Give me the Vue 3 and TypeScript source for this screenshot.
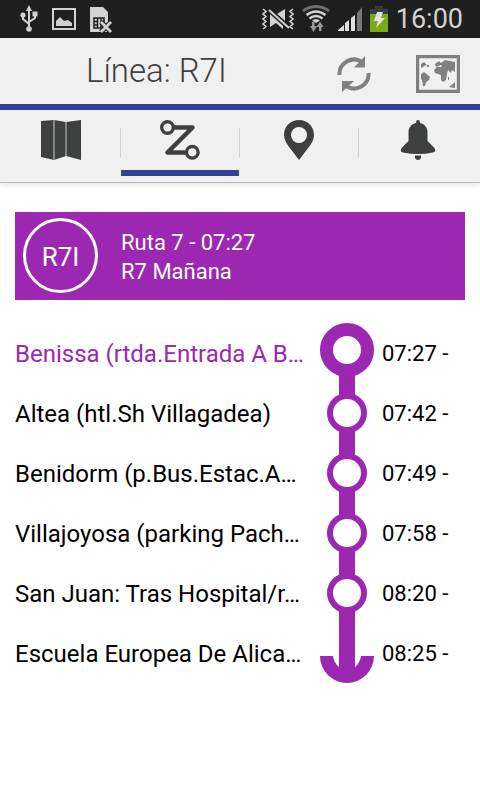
<script setup lang="ts">
import { ref } from 'vue'

type StopKind = 'start' | 'middle' | 'end'

interface Stop {
  name: string
  time: string
  kind: StopKind
}

const stops: Stop[] = [
  { name: 'Benissa (rtda.Entrada A B…', time: '07:27 -', kind: 'start' },
  { name: 'Altea (htl.Sh Villagadea)', time: '07:42 -', kind: 'middle' },
  { name: 'Benidorm (p.Bus.Estac.A…', time: '07:49 -', kind: 'middle' },
  { name: 'Villajoyosa (parking Pach…', time: '07:58 -', kind: 'middle' },
  { name: 'San Juan: Tras Hospital/r…', time: '08:20 -', kind: 'middle' },
  { name: 'Escuela Europea De Alica…', time: '08:25 -', kind: 'end' },
]

const tabs = ['map', 'route', 'place', 'alerts'] as const
const active = ref<(typeof tabs)[number]>('route')
</script>

<template>
  <div class="screen">
    <div class="status">
      <div class="status-group notices">
        <svg width="18" height="28" viewBox="0 0 18 28" fill="none" stroke="#d2d2d2" stroke-width="2">
          <path d="M9 4V24M3 10V14L9 19M15 9V13L9 17" />
          <path d="M9 0L12 6H6Z" fill="#d2d2d2" stroke="none" />
          <circle cx="3" cy="10" r="2.6" fill="#d2d2d2" stroke="none" />
          <circle cx="9" cy="24" r="2.8" fill="#d2d2d2" stroke="none" />
          <path d="M12.5 6.500h5v5h-5z" fill="#d2d2d2" stroke="none" />
        </svg>
        <svg width="24" height="22" viewBox="0 0 24 22">
          <path d="M1 1H23V21H1Z" fill="none" stroke="#d2d2d2" stroke-width="2" />
          <path d="M4 18V13L8 9L12 13L16 12L20 15V18Z" fill="#d2d2d2" />
        </svg>
        <svg width="24" height="27" viewBox="0 0 24 27">
          <path d="M0 1H13L18 6V26H0Z" fill="#d2d2d2" />
          <path d="M4 12H14V22H4ZM7.500 12V22M11 12V22M4 15.500H7.500M11 15.500H14M4 19H7.500" fill="none" stroke="#1f1f1f" stroke-width="1.500" />
          <path d="M11 16L21 26M21 16L11 26" stroke="#1f1f1f" stroke-width="5" />
          <path d="M11 16L21 26M21 16L11 26" stroke="#d2d2d2" stroke-width="2.800" />
        </svg>
      </div>
      <div class="status-group system">
        <svg width="32" height="22" viewBox="0 0 32 22">
          <path d="M8 3H9L21 15V21L14 15L8 19ZM15 6L23 1V13Z" fill="#d2d2d2" />
          <path d="M7 2L27 20" stroke="#1f1f1f" stroke-width="5" />
          <path d="M7 2L27 20" stroke="#d2d2d2" stroke-width="2" />
          <path d="M1 1L4 3.500L1 6L4 8.500L1 11L4 13.500L1 16L4 18.500L1 21M31 1L28 3.500L31 6L28 8.500L31 11L28 13.500L31 16L28 18.500L31 21" fill="none" stroke="#d2d2d2" stroke-width="1.500" />
        </svg>
        <svg width="28" height="28" viewBox="0 0 28 28" fill="none">
          <path d="M1 6Q14 -3 27 6" stroke="#6d6d6d" stroke-width="3" />
          <path d="M4.500 10Q14 3 23.500 10M7.500 13.500Q14 8.500 20.500 13.500" stroke="#d2d2d2" stroke-width="2.600" />
          <path d="M10 15.500Q14 12.500 18 15.500L14 18Z" fill="#d2d2d2" />
          <path d="M8 21H10V17H12.500V21H15L11.500 27ZM17 26V22H14.500L18 16.500L21.500 22H19.500V26Z" fill="#969696" />
        </svg>
        <svg width="24" height="24" viewBox="0 0 24 24">
          <path d="M0 24V23L6 18V24ZM7 24V16L11 13V24ZM13 24V11L17 8V24Z" fill="#e0e0e0" />
          <path d="M19 24V6L24 0V24Z" fill="#777" />
        </svg>
        <svg width="18" height="26" viewBox="0 0 18 26">
          <path d="M5 0H13V3H18V8H0V3H5Z" fill="#3b3b3b" />
          <path d="M0 8H18V26H0Z" fill="#7aab14" />
          <path d="M7 6H13L11 12H15L6 22L8 15H4Z" fill="#e2e2e2" />
        </svg>
        <span class="clock">16:00</span>
      </div>
    </div>

    <header class="bar">
      <h1>Línea: R7I</h1>
      <div class="actions">
        <button type="button" aria-label="Actualizar">
          <svg width="34" height="36" viewBox="0 0 34 36">
            <path d="M2.500 19A14.500 14.500 0 0 1 25 6" fill="none" stroke="#808080" stroke-width="4" />
            <path d="M31.500 17A14.500 14.500 0 0 1 9 30" fill="none" stroke="#808080" stroke-width="4" />
            <path d="M28 0V11.500H17ZM5 36V25H17Z" fill="#808080" />
          </svg>
        </button>
        <button type="button" aria-label="Mapa">
          <svg width="44" height="38" viewBox="0 0 44 38">
            <path d="M1.500 1.500H42.500V36.500H1.500Z" fill="none" stroke="#808080" stroke-width="3.400" />
            <g fill="#808080">
              <path d="M5 9L8 7L11 10L8 11L6 13L5 12Z" />
              <path d="M5 19L8 17L12 20L14 22L13 25L10 27L9 31L7 31L6 25L5 24Z" />
              <path d="M19 9L23 6L25 8L29 5L34 6L39 7V17L36 15L35 18L32 15L31 19L30 25L27 27L25 25V20L19 18L18 15L21 12H26L25 10L20 12Z" />
              <path d="M33 32L39 27V33Z" />
              <path d="M11 10H13V12H11ZM32 22H33V25H32Z" />
            </g>
          </svg>
        </button>
      </div>
    </header>

    <nav class="tabs">
      <button
        v-for="tab in tabs"
        :key="tab"
        type="button"
        :class="['tab', { active: active === tab }]"
        :aria-label="tab"
        @click="active = tab"
      >
        <svg v-if="tab === 'map'" width="40" height="40" viewBox="0 0 40 40">
          <path d="M0 1L13 0L25 2L40 0V40L25 36L13 40L0 37Z" fill="#3e403f" />
          <path d="M13 0V40M25 2V36" stroke="#8d8e8e" stroke-width="1.800" />
        </svg>
        <svg v-else-if="tab === 'route'" width="40" height="40" viewBox="0 0 40 40" fill="none" stroke="#3e403f">
          <path d="M14 7.500H32.500L7.500 32.500H26" stroke-width="4.500" stroke-linejoin="round" />
          <circle cx="7.500" cy="7.500" r="5.800" stroke-width="3.400" />
          <circle cx="32.300" cy="32.300" r="5.800" stroke-width="3.400" />
        </svg>
        <svg v-else-if="tab === 'place'" width="30" height="40" viewBox="0 0 30 40">
          <path fill-rule="evenodd" d="M15 0C6.500 0 0 6.500 0 15C0 19 2 22.500 4 25.500L15 40L26 25.500C28 22.500 30 19 30 15C30 6.500 23.500 0 15 0ZM15 7A8 8 0 1 1 15 23A8 8 0 1 1 15 7Z" fill="#3e403f" />
        </svg>
        <svg v-else width="36" height="40" viewBox="0 0 36 40" fill="#3e403f">
          <path d="M16.500 0.500Q18 -0.500 19.500 0.500L20 3C25 4 27.500 8 27.500 12V21L34 27.500Q37 31.500 33 32.500Q25 34 18 34Q11 34 3 32.500Q-1 31.500 2 27.500L8.500 21V12C8.500 8 11 4 16 3Z" />
          <path d="M15 35.500H21V38Q20 40 18 40Q16 40 15 38Z" />
        </svg>
      </button>
    </nav>

    <main>
      <section class="route">
        <div class="badge">R7I</div>
        <div class="route-text">
          <div>Ruta 7 - 07:27</div>
          <div>R7 Mañana</div>
        </div>
      </section>

      <ol class="stops">
        <li v-for="stop in stops" :key="stop.time" :class="['stop', stop.kind]">
          <span class="name">{{ stop.name }}</span>
          <svg class="track" width="54" height="60" viewBox="0 0 54 60">
            <template v-if="stop.kind === 'start'">
              <path d="M19 40H35V60H19Z" fill="#9c27b0" />
              <circle cx="27" cy="27" r="20.500" fill="#fff" stroke="#9c27b0" stroke-width="13" />
            </template>
            <template v-else-if="stop.kind === 'middle'">
              <path d="M19 0H35V60H19Z" fill="#9c27b0" />
              <circle cx="27" cy="30" r="17" fill="#fff" stroke="#9c27b0" stroke-width="6" />
            </template>
            <path
              v-else
              d="M19 0H35V44Q40 40 41 33H54A27 27 0 0 1 0 33H13Q14 40 19 44Z"
              fill="#9c27b0"
            />
          </svg>
          <time>{{ stop.time }}</time>
        </li>
      </ol>
    </main>
  </div>
</template>

<style>
body {
  margin: 0;
  background: #fff;
}
</style>

<style scoped>
.screen {
  min-height: 100vh;
  background: #fff;
  color: #000;
  font-family: Roboto, "Liberation Sans", sans-serif;
}

svg {
  display: block;
  flex: none;
}

button {
  padding: 0;
  border: 0;
  background: none;
  cursor: pointer;
}

.status {
  display: flex;
  justify-content: space-between;
  align-items: center;
  height: 38px;
  padding: 0 17px 0 20px;
  background: #1f1f1f;
}

.status-group {
  display: flex;
  align-items: center;
}

.notices {
  gap: 14px;
}

.system {
  gap: 8px;
}

.clock {
  color: #d2d2d2;
  font-size: 27px;
  line-height: 38px;
}

.bar {
  display: flex;
  justify-content: space-between;
  align-items: center;
  height: 66px;
  padding: 0 20px 0 86px;
  border-bottom: 6px solid #324394;
  background: #f0f0f0;
}

.bar h1 {
  margin: 0;
  color: #3e403f;
  font-size: 33px;
  font-weight: 300;
  line-height: 66px;
}

.actions {
  display: flex;
  align-items: center;
  gap: 45px;
  padding-top: 6px;
}

.tabs {
  display: grid;
  grid-template-columns: repeat(4, 1fr);
  gap: 1px;
  height: 72px;
  padding: 0 3px 0 2px;
  border-bottom: 1px solid #b8b8b8;
  background: #f0f0f0;
  box-shadow: 0 2px 6px rgba(0, 0, 0, 0.1);
}

.tab {
  position: relative;
  display: flex;
  justify-content: center;
  align-items: flex-start;
  padding-top: 10px;
}

.tab + .tab::before {
  content: "";
  position: absolute;
  top: 18px;
  left: -1px;
  width: 1px;
  height: 30px;
  background: #d2d2d2;
}

.tab.active::after {
  content: "";
  position: absolute;
  right: 0;
  bottom: 6px;
  left: 0;
  height: 6px;
  background: #324394;
}

main {
  padding: 29px 15px;
}

.route {
  display: flex;
  align-items: flex-start;
  gap: 23px;
  padding: 6px 8px 7px;
  background: #9c27b0;
  color: #fff;
}

.badge {
  box-sizing: border-box;
  width: 75px;
  height: 75px;
  border: 3px solid #fff;
  border-radius: 50%;
  font-size: 26px;
  line-height: 72px;
  text-align: center;
}

.route-text {
  padding-top: 10px;
  font-size: 22px;
  line-height: 29px;
}

.stops {
  margin: 23px 0 0;
  padding: 0;
  list-style: none;
}

.stop {
  display: grid;
  grid-template-columns: 1fr 54px 91px;
  align-items: center;
  height: 60px;
}

.name,
.stop time {
  padding-top: 2px;
  line-height: 32px;
  white-space: nowrap;
}

.name {
  overflow: hidden;
  font-size: 24px;
}

.start .name {
  color: #9c27b0;
}

.stop time {
  padding-left: 8px;
  font-size: 22px;
}
</style>
